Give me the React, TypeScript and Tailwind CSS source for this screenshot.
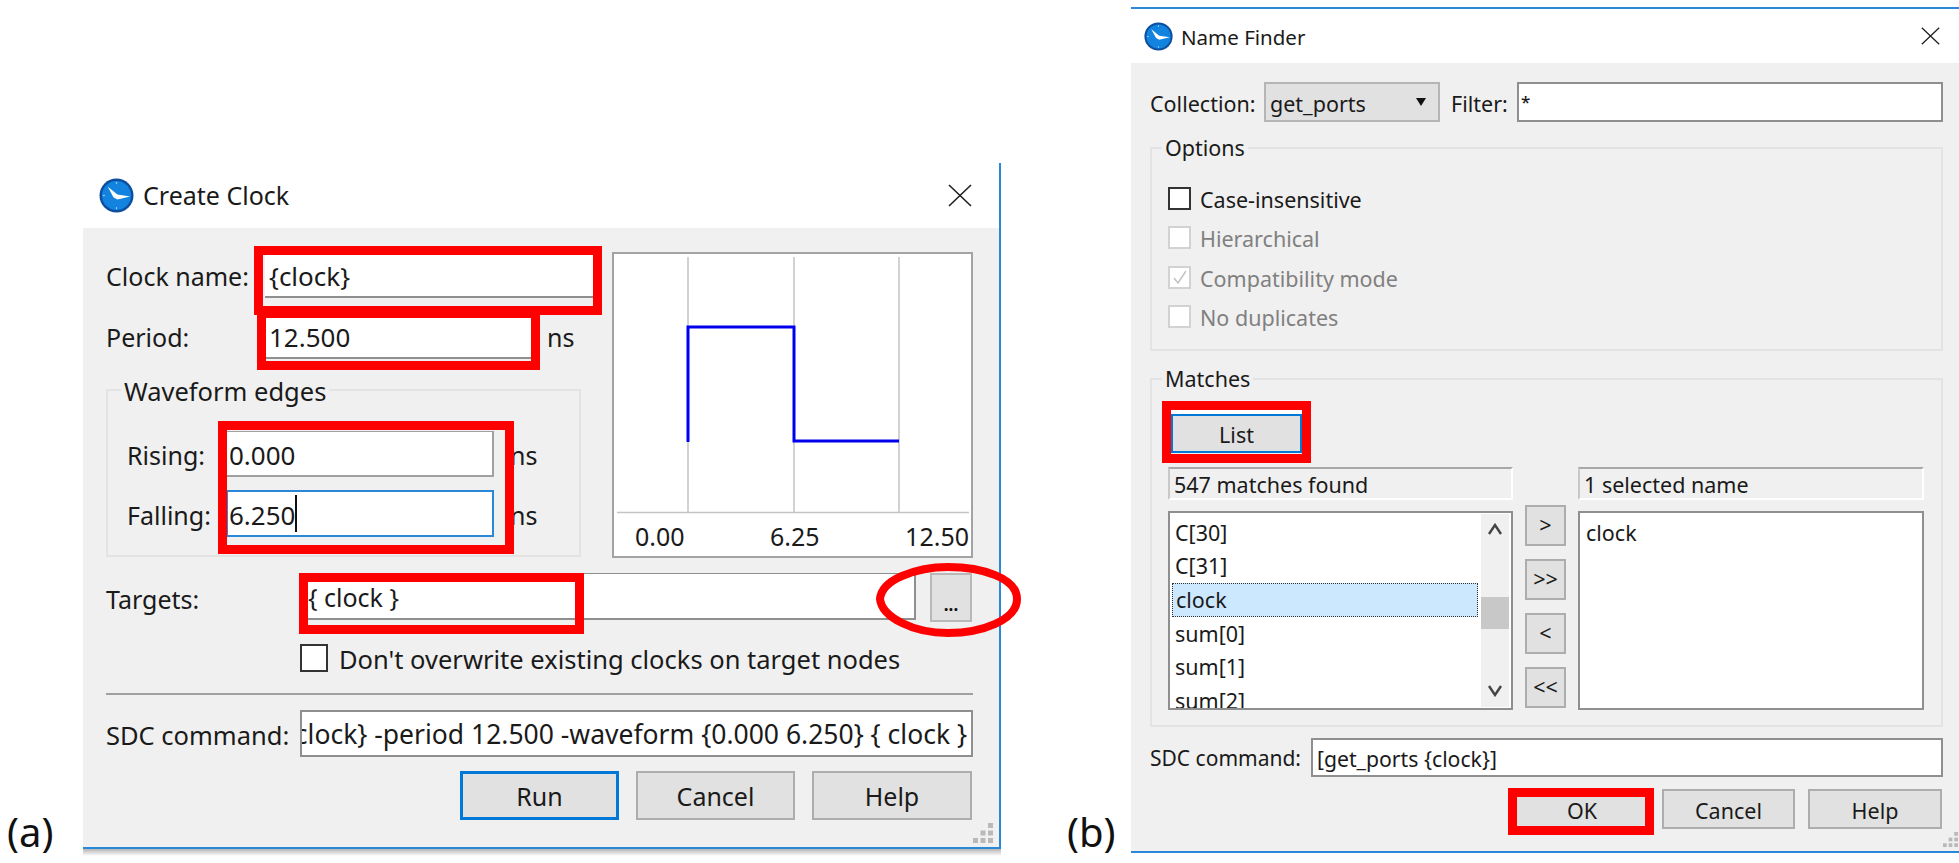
import React from "react";

// clock badge used in both title bars
function ClockIcon({ className }: { className: string }) {
  return (
    <svg viewBox="0 0 36 36" className={className}>
      <circle cx="18" cy="18" r="17.5" fill="#0d4f9e" />
      <circle cx="18" cy="18" r="15" fill="#1284e0" />
      <path d="M9 9 L19 17 L32 19 L19 22 L15 20 Z" fill="#ffffff" />
      <g fill="#9fd2f7">
        <rect x="17.4" y="4" width="1.2" height="2" />
        <rect x="17.4" y="30" width="1.2" height="2" />
        <rect x="4" y="17.4" width="2" height="1.2" />
      </g>
    </svg>
  );
}

function CloseIcon({ className }: { className: string }) {
  return (
    <svg viewBox="0 0 24 24" preserveAspectRatio="none" className={className}>
      <path d="M1 1 L23 23 M23 1 L1 23" stroke="#222" strokeWidth="1.6" fill="none" />
    </svg>
  );
}

function Grip({ className }: { className: string }) {
  const dots = [
    [12, 0],
    [6, 6],
    [12, 6],
    [0, 12],
    [6, 12],
    [12, 12],
  ];
  return (
    <svg viewBox="0 0 16 16" className={className}>
      {dots.map(([x, y]) => (
        <rect key={`${x}-${y}`} x={x} y={y} width="4" height="4" fill="#b9b9b9" />
      ))}
    </svg>
  );
}

function RedBox({ className }: { className: string }) {
  return <div className={`absolute border-[9px] border-[#ff0000] ${className}`} />;
}

function CreateClock() {
  return (
    <div className="absolute left-[83px] top-[163px] w-[918px] border-r-2 border-b-2 border-[#2b88d8] text-[25px] text-[#1a1a1a]">
      <div className="h-[65px] bg-white flex items-center pl-[16px] pr-[27px]">
        <ClockIcon className="w-[35px] h-[35px]" />
        <span className="ml-[9px]">Create Clock</span>
        <CloseIcon className="ml-auto w-[24px] h-[23px]" />
      </div>
      <div className="relative h-[619px] bg-[#f0f0f0] pl-[23px] pr-[26px] pt-[24px]">
        <div className="flex items-start">
          <div className="w-[489px]">
            <div className="flex items-center h-[46px]">
              <span className="w-[159px] pt-[4px] shrink-0">Clock name:</span>
              <div className="flex-1 h-full bg-white border-b-2 border-[#8f8f8f] pl-[4px] pt-[4px] text-[26px] flex items-center">
                {"{clock}"}
              </div>
            </div>
            <div className="flex items-center h-[44px] mt-[17px]">
              <span className="w-[159px] shrink-0 pt-[1px]">Period:</span>
              <div className="w-[267px] h-full bg-white border-b-2 border-[#8f8f8f] pl-[4px] pt-[2px] text-[26px] flex items-center">
                12.500
              </div>
              <span className="ml-[15px] pt-[2px]">ns</span>
            </div>
            <div className="relative w-[475px] h-[168px] mt-[30px] border-2 border-[#e3e3e3] pl-[19px] pt-[40px]">
              <span className="absolute left-[13px] top-[-22px] px-[3px] bg-[#f0f0f0] leading-[44px] text-[25.5px]">
                Waveform edges
              </span>
              <div className="flex items-center h-[46px]">
                <span className="w-[99px] pt-[4px]">Rising:</span>
                <div className="w-[268px] h-full bg-white border border-b-2 border-r-2 border-[#a0a0a0] pl-[2px] pt-[4px] text-[26px] flex items-center">
                  0.000
                </div>
                <span className="ml-[16px] pt-[4px]">ns</span>
              </div>
              <div className="flex items-center h-[47px] mt-[13px]">
                <span className="w-[99px] pt-[4px]">Falling:</span>
                <div className="w-[268px] h-full bg-white border-2 border-[#2b88d8] pl-[1px] pt-[4px] text-[26px] flex items-center">
                  6.250
                  <span className="w-[2px] h-[37px] mt-[-4px] bg-[#111]" />
                </div>
                <span className="ml-[16px] pt-[4px]">ns</span>
              </div>
            </div>
          </div>
          <div className="ml-[17px] w-[361px] h-[306px] border-2 border-[#a3a3a3] bg-white">
            <svg width="357" height="260" className="block">
              <path d="M74 3 V258 M180 3 V258 M285 3 V258 M3 258.5 H355" stroke="#c4c4c4" strokeWidth="1.5" fill="none" />
              <path d="M74 188 V73 H180 V187 H285" stroke="#0000ee" strokeWidth="3" fill="none" />
            </svg>
            <div className="flex justify-between items-center h-[42px] pl-[21px] pr-[2px] pt-[4px]">
              <span>0.00</span>
              <span>6.25</span>
              <span>12.50</span>
            </div>
          </div>
        </div>

        <div className="flex items-start mt-[15px]">
          <span className="w-[193px] shrink-0 pt-[8px]">Targets:</span>
          <div className="w-[617px] h-[47px] bg-white border-t border-b-2 border-r-2 border-[#8f8f8f] pl-[9px] pt-[4px] flex items-center whitespace-pre">
            {"{ clock }"}
          </div>
          <div className="ml-[14px] w-[42px] h-[49px] bg-[#e1e1e1] border-2 border-[#b8b8b8] flex justify-center items-center pt-[14px] text-[17px] font-bold leading-none text-[#111]">
            ...
          </div>
        </div>
        <div className="flex items-center h-[28px] mt-[22px] ml-[194px]">
          <div className="w-[28px] h-[28px] bg-white border-2 border-[#333]" />
          <span className="ml-[11px] text-[25.5px] pt-[2px]">Don't overwrite existing clocks on target nodes</span>
        </div>
        <div className="h-[2px] bg-[#a0a0a0] mt-[21px]" />
        <div className="flex items-center mt-[15px]">
          <span className="w-[194px] shrink-0 text-[25.5px] pt-[4px] whitespace-nowrap">SDC command:</span>
          <div className="flex-1 h-[47px] bg-white border-2 border-[#8f8f8f] overflow-hidden flex justify-end items-center pr-[4px] pt-[3px]">
            <span className="whitespace-pre shrink-0 text-[26.5px]">{"-name {clock} -period 12.500 -waveform {0.000 6.250} { clock }"}</span>
          </div>
        </div>
        <div className="flex justify-end gap-[17px] mt-[14px] mr-[1px]">
          <div className="w-[159px] h-[49px] bg-[#e1e1e1] border-[3px] border-[#0078d7] flex items-center justify-center pt-[3px]">Run</div>
          <div className="w-[159px] h-[49px] bg-[#e1e1e1] border-2 border-[#adadad] flex items-center justify-center pt-[3px]">Cancel</div>
          <div className="w-[160px] h-[49px] bg-[#e1e1e1] border-2 border-[#adadad] flex items-center justify-center pt-[3px]">Help</div>
        </div>
        <Grip className="absolute right-[6px] bottom-[4px] w-[20px] h-[20px]" />
      </div>
      <div className="absolute left-0 right-[-2px] top-full mt-[2px] h-[7px] bg-linear-to-b from-[#b5b5b5] to-white" />
    </div>
  );
}

function OptionRow({ label, disabled, checked }: { label: string; disabled?: boolean; checked?: boolean }) {
  return (
    <div className="flex items-center h-[22px]">
      <div className={`w-[23px] h-[23px] border-2 bg-white flex items-center justify-center ${disabled ? "border-[#d2d2d2]" : "border-[#333]"}`}>
        {checked && (
          <svg viewBox="0 0 16 16" className="w-[16px] h-[16px]">
            <path d="M2 9 L6 14 L14 2" stroke="#c2c2c2" strokeWidth="1.5" fill="none" />
          </svg>
        )}
      </div>
      <span className={`ml-[9px] pt-[4px] text-[21.5px] ${disabled ? "text-[#808080]" : ""}`}>{label}</span>
    </div>
  );
}

function MoveButton({ label }: { label: string }) {
  return (
    <div className="w-[41px] h-[41px] bg-[#e1e1e1] border-2 border-[#adadad] flex items-center justify-center">{label}</div>
  );
}

function NameFinder() {
  const rows = ["C[30]", "C[31]", "clock", "sum[0]", "sum[1]", "sum[2]"];
  return (
    <div className="absolute left-[1131px] top-[7px] w-[828px] border-t-2 border-b-2 border-[#2b88d8] text-[21.5px] text-[#1a1a1a]">
      <div className="h-[54px] bg-white flex items-center pl-[13px] pr-[19px]">
        <ClockIcon className="w-[29px] h-[29px]" />
        <span className="ml-[8px] text-[20.5px] pt-[2px]">Name Finder</span>
        <CloseIcon className="ml-auto w-[19px] h-[18px]" />
      </div>
      <div className="relative h-[788px] bg-[#f0f0f0] pl-[19px] pr-[16px] pt-[19px]">
        <div className="flex items-center">
          <span className="w-[114px] pt-[4px]">Collection:</span>
          <div className="w-[176px] h-[40px] bg-[#e1e1e1] border-2 border-[#b5b5b5] pl-[4px] pt-[4px] flex items-center relative">
            get_ports
            <svg viewBox="0 0 10 8" className="absolute right-[12px] top-[14px] w-[10px] h-[8px]">
              <path d="M0 0 H10 L5 8 Z" fill="#111" />
            </svg>
          </div>
          <span className="ml-[11px] w-[66px] pt-[4px]">Filter:</span>
          <div className="flex-1 h-[40px] bg-white border-2 border-[#8f8f8f] pl-[2px] text-[17px] font-medium flex items-center">*</div>
        </div>

        <div className="relative h-[204px] mt-[25px] border-2 border-[#e3e3e3] pl-[16px] pt-[38px] flex flex-col gap-[17.5px]">
          <span className="absolute left-[10px] top-[-19px] px-[3px] bg-[#f0f0f0] leading-[36px]">Options</span>
          <OptionRow label="Case-insensitive" />
          <OptionRow label="Hierarchical" disabled />
          <OptionRow label="Compatibility mode" disabled checked />
          <OptionRow label="No duplicates" disabled />
        </div>

        <div className="relative h-[349px] mt-[27px] border-2 border-[#e3e3e3] pl-[16px] pt-[34px]">
          <span className="absolute left-[10px] top-[-19px] px-[3px] bg-[#f0f0f0] leading-[36px]">Matches</span>
          <div className="ml-[3px] w-[131px] h-[39px] bg-[#e1e1e1] border-2 border-[#0078d7] flex items-center justify-center pt-[4px] shadow-[0_-4px_0_#fff]">
            List
          </div>
          <div className="grid grid-cols-[345px_65px_346px] mt-[14px]">
            <div className="h-[33px] border-t-2 border-l-2 border-b-2 border-r-2 border-t-[#a8a8a8] border-l-[#c8c8c8] border-b-white border-r-white pl-[4px] pt-[3px] flex items-center">
              547 matches found
            </div>
            <div />
            <div className="h-[33px] border-t-2 border-l-2 border-b-2 border-r-2 border-t-[#a8a8a8] border-l-[#c8c8c8] border-b-white border-r-white pl-[4px] pt-[3px] flex items-center">
              1 selected name
            </div>
            <div className="mt-[11px] h-[199px] bg-white border-2 border-[#8f8f8f] overflow-hidden flex">
              <div className="flex-1 pt-[3px] pl-[2px] min-w-0">
                {rows.map((row) => (
                  <div
                    key={row}
                    className={`h-[33.7px] flex items-center pl-[3px] ${row === "clock" ? "bg-[#cce8ff] border border-dotted border-[#333]" : ""}`}
                  >
                    {row}
                  </div>
                ))}
              </div>
              <div className="w-[28px] ml-[3px] mr-[2px] my-[1px] bg-[#f0f0f0] flex flex-col items-center">
                <svg viewBox="0 0 14 12" className="w-[14px] h-[12px] mt-[9px] shrink-0">
                  <path d="M1 11 L7 2 L13 11" stroke="#444" strokeWidth="2.4" fill="none" />
                </svg>
                <div className="w-full h-[32px] bg-[#c8c8c8] mt-[62px] shrink-0" />
                <svg viewBox="0 0 14 12" className="w-[14px] h-[12px] mt-[56px] shrink-0">
                  <path d="M1 1 L7 10 L13 1" stroke="#444" strokeWidth="2.4" fill="none" />
                </svg>
              </div>
            </div>
            <div className="mt-[5px] ml-[12px] flex flex-col gap-[13px]">
              <MoveButton label=">" />
              <MoveButton label=">>" />
              <MoveButton label="<" />
              <MoveButton label="<<" />
            </div>
            <div className="mt-[11px] h-[199px] bg-white border-2 border-[#8f8f8f] pt-[3px] pl-[6px]">
              <div className="h-[33.7px] flex items-center">clock</div>
            </div>
          </div>
        </div>

        <div className="flex items-center mt-[11px]">
          <span className="w-[161px] shrink-0 pt-[3px] whitespace-nowrap text-[21px]">SDC command:</span>
          <div className="flex-1 h-[39px] bg-white border-2 border-[#8f8f8f] pl-[4px] pt-[3px] text-[21.2px] flex items-center">
            {"[get_ports {clock}]"}
          </div>
        </div>
        <div className="flex justify-end gap-[13px] mt-[12px] mr-[1px]">
          <div className="w-[134px] h-[40px] bg-[#e1e1e1] flex items-center justify-center pt-[4px]">OK</div>
          <div className="w-[133px] h-[40px] bg-[#e1e1e1] border-2 border-[#adadad] flex items-center justify-center pt-[4px]">Cancel</div>
          <div className="w-[134px] h-[40px] bg-[#e1e1e1] border-2 border-[#adadad] flex items-center justify-center pt-[4px]">Help</div>
        </div>
        <Grip className="absolute right-[1px] bottom-[4px] w-[15px] h-[15px]" />
      </div>
    </div>
  );
}

export default function App() {
  return (
    <div className="relative w-[1959px] h-[863px] overflow-hidden bg-white font-['Noto_Sans',sans-serif]">
      <span className="absolute left-[7px] top-[804px] text-[40px] leading-[56px] text-[#111]">(a)</span>
      <CreateClock />
      <span className="absolute left-[1067px] top-[804px] text-[40px] leading-[56px] text-[#111]">(b)</span>
      <NameFinder />

      {/* red annotations over the dialogs */}
      <RedBox className="left-[257px] top-[309px] w-[283px] h-[61px]" />
      <RedBox className="left-[254px] top-[246px] w-[348px] h-[69px]" />
      <RedBox className="left-[218px] top-[421px] w-[296px] h-[133px]" />
      <RedBox className="left-[299px] top-[573px] w-[285px] h-[61px]" />
      <svg className="absolute left-[872px] top-[560px] w-[152px] h-[80px]" viewBox="0 0 152 80">
        <path
          d="M8 39 C9 29 16 22 30 16 C44 10 60 7 76 7 C110 7 145 18 145 39 C145 60 110 73 76 73 C60 73 44 70 30 63 C16 56 9 49 8 39 Z"
          fill="none"
          stroke="#ff0000"
          strokeWidth="8"
        />
      </svg>
      <RedBox className="left-[1162px] top-[401px] w-[149px] h-[62px]" />
      <RedBox className="left-[1508px] top-[788px] w-[146px] h-[47px]" />
    </div>
  );
}
